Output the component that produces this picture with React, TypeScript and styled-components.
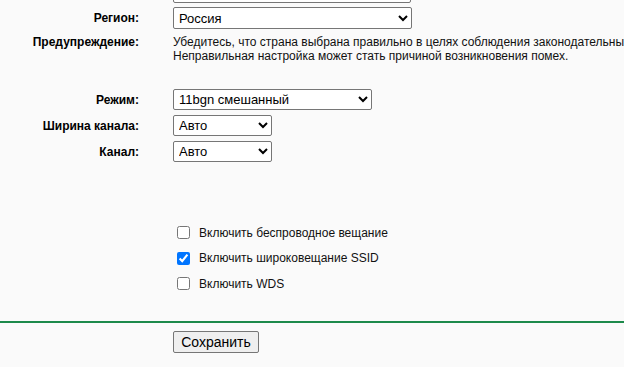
import React from 'react';
import styled, { createGlobalStyle } from 'styled-components';

const Global = createGlobalStyle`
  html, body {
    margin: 0;
    padding: 0;
    background: #fafafa;
    overflow: hidden;
  }
  body {
    font-family: "Liberation Sans", Arial, sans-serif;
    font-size: 12px;
    color: #000;
  }
`;

const Page = styled.div`
  width: 624px;
  height: 367px;
  overflow: hidden;
`;

const Form = styled.div`
  margin-top: -19px;
  display: flex;
  flex-direction: column;
`;

type RowProps = { $mt?: number; $h?: number };
const Row = styled.div<RowProps>`
  display: grid;
  grid-template-columns: 139px 1fr;
  column-gap: 34px;
  align-items: center;
  margin-top: ${(p: RowProps) => p.$mt ?? 0}px;
  height: ${(p: RowProps) => (p.$h ? `${p.$h}px` : 'auto')};
`;

const TopRow = styled(Row)`
  align-items: start;
`;

const Label = styled.div`
  text-align: right;
  font-weight: bold;
  font-size: 12px;
  white-space: nowrap;
`;

const TextInput = styled.input`
  box-sizing: border-box;
  width: 238px;
  height: 22px;
  border: 1px solid #767676;
  border-radius: 2px;
  background: #fff;
  font-family: inherit;
  font-size: 13px;
  padding: 0 4px;
`;

type SelectProps = { $w: number };
const Select = styled.select<SelectProps>`
  box-sizing: border-box;
  width: ${(p: SelectProps) => p.$w}px;
  height: ${(p: SelectProps) => (p.$w > 210 ? 22 : 21)}px;
  border: 1px solid #767676;
  border-radius: 2px;
  background-color: #fff;
  font-family: "Liberation Sans", Arial, sans-serif;
  font-size: 13px;
  color: #000;
  padding: 0 0 0 1px;
`;

const Note = styled.div`
  font-size: 12px;
  line-height: 14px;
  color: #111;
  overflow: hidden;
`;

const NoteLine = styled.div`
  white-space: nowrap;
`;

const Checks = styled.div`
  margin-top: 58px;
  padding-left: 173px;
  display: flex;
  flex-direction: column;
`;

const CheckRow = styled.label`
  display: flex;
  align-items: center;
  height: 25.5px;
  font-size: 12px;
  color: #111;
`;

const Box = styled.input`
  width: 13px;
  height: 13px;
  margin: 0 9px 0 4px;
`;

const Divider = styled.hr`
  margin: 24px 0 0;
  border: none;
  border-top: 2px solid #1d8a4b;
  height: 0;
`;

const Actions = styled.div`
  padding: 8px 0 0 173px;
`;

const Button = styled.button`
  box-sizing: border-box;
  width: 86px;
  height: 22px;
  font-family: "Liberation Sans", Arial, sans-serif;
  font-size: 14px;
  color: #000;
  background: #efefef;
  border: 1px solid #767676;
  border-radius: 2px;
  padding: 0;
`;

const App = () => {
  return (
    <Page>
      <Global />
      <Form>
        <Row $h={22}>
          <Label />
          <TextInput defaultValue="" />
        </Row>
        <Row $mt={4} $h={22}>
          <Label>Регион:</Label>
          <Select $w={239} defaultValue="ru">
            <option value="ru">Россия</option>
          </Select>
        </Row>
        <TopRow $mt={6}>
          <Label>Предупреждение:</Label>
          <Note>
            <NoteLine>Убедитесь, что страна выбрана правильно в целях соблюдения законодательных требований.</NoteLine>
            <NoteLine>Неправильная настройка может стать причиной возникновения помех.</NoteLine>
          </Note>
        </TopRow>
        <Row $mt={26} $h={21}>
          <Label>Режим:</Label>
          <Select $w={199} defaultValue="bgn">
            <option value="bgn">11bgn смешанный</option>
          </Select>
        </Row>
        <Row $mt={5} $h={21}>
          <Label>Ширина канала:</Label>
          <Select $w={99} defaultValue="auto">
            <option value="auto">Авто</option>
          </Select>
        </Row>
        <Row $mt={5} $h={21}>
          <Label>Канал:</Label>
          <Select $w={99} defaultValue="auto">
            <option value="auto">Авто</option>
          </Select>
        </Row>
      </Form>
      <Checks>
        <CheckRow>
          <Box type="checkbox" />
          Включить беспроводное вещание
        </CheckRow>
        <CheckRow>
          <Box type="checkbox" defaultChecked />
          Включить широковещание SSID
        </CheckRow>
        <CheckRow>
          <Box type="checkbox" />
          Включить WDS
        </CheckRow>
      </Checks>
      <Divider />
      <Actions>
        <Button>Сохранить</Button>
      </Actions>
    </Page>
  );
};

export default App;
